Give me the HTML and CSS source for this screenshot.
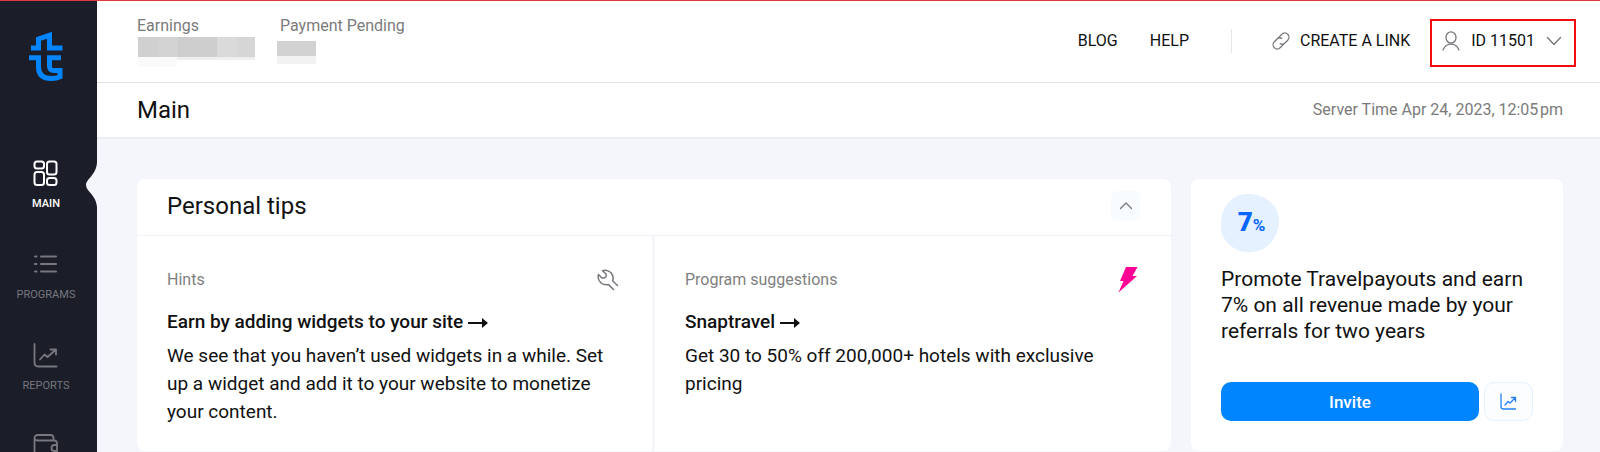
FILE: index.html
```
<!DOCTYPE html>
<html lang="en">
<head>
<meta charset="utf-8">
<meta name="viewport" content="width=device-width, initial-scale=1">
<title>Main</title>
<link rel="stylesheet" href="styles.css">
</head>
<body>
<div class="app">
  <aside class="sidebar">
    <a class="logo" href="#" aria-label="Travelpayouts">
      <svg width="34" height="52" viewBox="0 0 34 52" fill="none" stroke="#0085ff" stroke-width="5">
        <path d="M2 17H9.500V8L20.500 4.300V17H33.500"/>
        <path d="M0 26.700H9.500V36C9.500 44 14 47.500 22.500 47.500C26 47.500 28.500 47 31 45.700V39.500H25C21.500 39.500 20.500 38 20.500 35V26.700H32"/>
      </svg>
    </a>
    <nav class="menu">
      <a class="menu-item is-active" href="#">
        <svg width="26" height="26" viewBox="0 0 26 26" fill="none" stroke="currentColor" stroke-width="2">
          <rect x="1.500" y="1.500" width="9.500" height="7" rx="2.500"/>
          <rect x="14" y="1.500" width="9.500" height="13" rx="2.500"/>
          <rect x="1.500" y="12" width="9.500" height="13" rx="2.500"/>
          <rect x="14" y="18" width="9.500" height="7" rx="2.500"/>
        </svg>
        <span>MAIN</span>
      </a>
      <a class="menu-item" href="#">
        <svg width="26" height="26" viewBox="0 0 26 26" fill="none" stroke="currentColor" stroke-width="2" stroke-linecap="round">
          <path d="M2 5.500H3.500M8 5.500H23M2 13H3.500M8 13H23M2 20.500H3.500M8 20.500H23"/>
        </svg>
        <span>PROGRAMS</span>
      </a>
      <a class="menu-item" href="#">
        <svg width="26" height="26" viewBox="0 0 26 26" fill="none" stroke="currentColor" stroke-width="1.800" stroke-linecap="round" stroke-linejoin="round">
          <path d="M1.500 2V20.500Q1.500 24.500 5.500 24.500H23.500M7 17.500L11.500 12.500L14.500 15L22.500 8M17.500 7.500H23V12.500"/>
        </svg>
        <span>REPORTS</span>
      </a>
      <a class="menu-item" href="#" aria-label="Wallet">
        <svg width="26" height="26" viewBox="0 0 26 26" fill="none" stroke="currentColor" stroke-width="1.800" stroke-linecap="round" stroke-linejoin="round">
          <path d="M20.500 7V5Q20.500 2 17.500 2H5Q1.500 2 1.500 5.500V21Q1.500 25 5.500 25H21Q24 25 24 22V18M1.500 5.500Q2 7.500 5 7.500H21Q24 7.500 24 10.500V12"/>
          <path d="M24 12H21.500A3 3 0 0 0 21.500 18H24Z"/>
        </svg>
      </a>
    </nav>
    <svg class="notch" width="12" height="44" viewBox="0 0 12 44"><path d="M12 0C11 8 8 11 3 17Q-1 22 3 27C8 33 11 36 12 44Z" fill="#f5f6fb"/></svg>
  </aside>

  <div class="page">
    <header class="topbar">
      <dl class="balances">
        <div class="balance">
          <dt>Earnings</dt>
          <dd><svg width="118" height="30" viewBox="0 0 118 30">
            <path d="M0 0H20V20H0Z" fill="#d0d0d0"/><path d="M20 0H40V20H20Z" fill="#d3d3d3"/><path d="M40 0H79V20H40Z" fill="#cecece"/><path d="M79 0H99V20H79Z" fill="#dadada"/><path d="M99 0H117V20H99Z" fill="#d6d6d6"/>
            <path d="M0 20H39V30H0Z" fill="#fafafa"/><path d="M39 20H117V23H39Z" fill="#efefef"/>
          </svg></dd>
        </div>
        <div class="balance pending">
          <dt>Payment Pending</dt>
          <dd><svg width="39" height="23" viewBox="0 0 39 23">
            <path d="M0 0H39V15H0Z" fill="#d2d2d2"/><path d="M0 15H39V23H0Z" fill="#f2f2f2"/>
          </svg></dd>
        </div>
      </dl>
      <nav class="links">
        <a class="link" href="#">BLOG</a>
        <a class="link" href="#">HELP</a>
        <span class="divider"></span>
        <a class="link with-icon" href="#">
          <svg width="18" height="18" viewBox="0 0 18 18" fill="none" stroke="#77787d" stroke-width="1.300" stroke-linecap="round">
            <path d="M6.500 5.600L9.800 2.300A3.700 3.700 0 0 1 15.700 2.300A4.200 4.200 0 0 1 15.700 8.200L12.700 11.200A3.600 3.600 0 0 1 8.300 11.600"/>
            <path d="M11.500 12.400L8.200 15.700A3.700 3.700 0 0 1 2.300 15.700A4.200 4.200 0 0 1 2.300 9.800L5.300 6.800A3.600 3.600 0 0 1 9.700 6.400"/>
          </svg>
          CREATE A LINK
        </a>
        <button class="account" type="button">
          <svg width="18" height="20" viewBox="0 0 18 20" fill="none" stroke="#77787d" stroke-width="1.300" stroke-linecap="round">
            <ellipse cx="9" cy="6.500" rx="5" ry="5.600"/><path d="M1 19Q3.500 13.200 9 13.200T17 19"/>
          </svg>
          ID 11501
          <svg width="16" height="10" viewBox="0 0 16 10" fill="none" stroke="#77787d" stroke-width="1.400" stroke-linecap="round" stroke-linejoin="round"><path d="M1.500 1.500L8 8.500L14.500 1.500"/></svg>
        </button>
      </nav>
    </header>

    <div class="titlebar">
      <h1>Main</h1>
      <p>Server Time Apr 24, 2023, 12:05&#8202;pm</p>
    </div>

    <main class="content">
      <section class="card tips">
        <header class="tips-head">
          <h2>Personal tips</h2>
          <button class="collapse" type="button" aria-label="Collapse">
            <svg width="14" height="8" viewBox="0 0 14 8" fill="none" stroke="#77787d" stroke-width="1.400" stroke-linecap="round" stroke-linejoin="round"><path d="M1.500 6.500L7 1L12.500 6.500"/></svg>
          </button>
        </header>
        <div class="tips-body">
          <article class="tip">
            <div class="tip-label">
              <span>Hints</span>
              <svg width="22" height="22" viewBox="0 0 22 22" fill="none" stroke="#77787d" stroke-width="1.500" stroke-linecap="round" stroke-linejoin="round">
                <path d="M16.500 20.500L11.500 15.600Q7.500 16.500 4 14Q0 10 1.500 5.500L4.700 8.700Q7 9.700 8.600 8Q9.800 6.200 8.800 4.700L5.500 1.700Q10 0 13.800 3.500Q17.300 7.500 15.600 11.700L20.500 16.500"/>
              </svg>
            </div>
            <h3><a href="#">Earn by adding widgets to your site
              <svg class="arrow" width="20" height="10" viewBox="0 0 20 10"><path d="M0 4H14V0L20 5L14 10V6H0Z" fill="currentColor"/></svg></a></h3>
            <p>We see that you haven’t used widgets in a while. Set up a widget and add it to your website to monetize your content.</p>
          </article>
          <article class="tip">
            <div class="tip-label">
              <span>Program suggestions</span>
              <svg width="20" height="26" viewBox="0 0 20 26"><path d="M8 0H19.500L14.500 9H19L0.500 25.500L5.500 14H2Z" fill="#ff0095"/></svg>
            </div>
            <h3><a href="#">Snaptravel
              <svg class="arrow" width="20" height="10" viewBox="0 0 20 10"><path d="M0 4H14V0L20 5L14 10V6H0Z" fill="currentColor"/></svg></a></h3>
            <p>Get 30 to 50% off 200,000+ hotels with exclusive pricing</p>
          </article>
        </div>
      </section>

      <section class="card promo">
        <div class="badge"><strong>7</strong><span>%</span></div>
        <p>Promote Travelpayouts and earn 7% on all revenue made by your referrals for two years</p>
        <div class="actions">
          <button class="invite" type="button">Invite</button>
          <button class="stats" type="button" aria-label="Statistics">
            <svg width="17" height="17" viewBox="0 0 17 17" fill="none" stroke="#2480ef" stroke-width="1.300" stroke-linecap="round" stroke-linejoin="round">
              <path d="M1 1V13.500Q1 16 3.500 16H15.500M5 12L8 8.500L10 10L15 5M11.500 4.500H15.500V8.500"/>
            </svg>
          </button>
        </div>
      </section>
    </main>
  </div>
</div>
</body>
</html>
```

FILE: styles.css
```
* {
  box-sizing: border-box;
}

body {
  margin: 0;
  background: #f5f6fb;
  color: #111;
  font-family: Roboto, "Liberation Sans", sans-serif;
  font-size: 19px;
  line-height: 28px;
}

h1, h2, h3, p, dl, dd {
  margin: 0;
  font-weight: 400;
}

a {
  color: inherit;
  text-decoration: none;
}

button {
  margin: 0;
  padding: 0;
  border: 0;
  background: none;
  color: inherit;
  font: inherit;
  cursor: pointer;
}

svg {
  display: block;
  flex: none;
}

.app {
  display: flex;
  min-height: 100vh;
  border-top: 1px solid #e03a3e;
}

.sidebar {
  position: sticky;
  top: 0;
  flex: none;
  width: 97px;
  height: calc(100vh - 1px);
  overflow: hidden;
  background: #1b1d28;
}

.logo {
  display: block;
  width: 34px;
  margin: 30px 0 0 29px;
}

.menu {
  display: flex;
  flex-direction: column;
  gap: 39px;
  padding: 77px 5px 0 0;
}

.menu-item {
  display: flex;
  flex-direction: column;
  align-items: center;
  gap: 10px;
  color: #77787f;
  font-size: 11px;
  line-height: 16px;
}

.menu-item.is-active {
  color: #fff;
  font-weight: 500;
}

.notch {
  position: absolute;
  top: 162px;
  right: 0;
}

.page {
  flex: 1;
  min-width: 0;
}

.topbar {
  display: flex;
  align-items: flex-start;
  justify-content: space-between;
  min-height: 82px;
  padding: 15px 24px 12px 40px;
  border-bottom: 1px solid #e0e0ea;
  background: #fff;
}

.balances {
  display: flex;
  gap: 21px;
  color: #7b7b7b;
  font-size: 16px;
  line-height: 20px;
}

.balance {
  min-width: 119px;
}

.balance dd {
  padding: 1px 0 0 1px;
}

.pending dt {
  padding-left: 3px;
}

.pending dd {
  padding: 5px 0 0;
}

.links {
  display: flex;
  align-items: flex-start;
  gap: 32px;
  padding-top: 3px;
  font-size: 16px;
  line-height: 24px;
}

.link {
  margin-top: 10px;
}

.divider {
  width: 1px;
  height: 24px;
  margin: 10px 8px 0 10px;
  background: #e5e5ea;
}

.with-icon {
  display: flex;
  align-items: center;
  gap: 10px;
}

.account {
  display: flex;
  align-items: center;
  gap: 11px;
  margin-left: -12px;
  padding: 8px 12px 12px 10px;
  border: 2px solid #f60c0c;
}

.titlebar {
  display: flex;
  align-items: center;
  justify-content: space-between;
  padding: 13px 37px 13px 40px;
  border-bottom: 2px solid #ecedf3;
  background: #fff;
}

.titlebar h1 {
  font-size: 24px;
}

.titlebar p {
  color: #7b7b7b;
  font-size: 16px;
}

.content {
  display: grid;
  grid-template-columns: 1034fr 372fr;
  gap: 20px;
  padding: 40px 37px 1px 40px;
}

.card {
  border-radius: 8px;
  background: #fff;
}

.tips {
  display: flex;
  flex-direction: column;
}

.tips-head {
  display: flex;
  align-items: center;
  justify-content: space-between;
  padding: 12px 31px 14px 30px;
  border-bottom: 1px solid #f0f1f6;
}

.tips-head h2 {
  font-size: 24px;
}

.collapse {
  display: grid;
  place-items: center;
  width: 29px;
  height: 30px;
  border-radius: 6px;
  background: #f8fbff;
}

.tips-body {
  display: grid;
  flex: 1;
  grid-template-columns: 518fr 516fr;
}

.tip {
  padding: 30px 33px 19px 30px;
}

.tip:first-child {
  border-right: 3px solid #f5f6fb;
}

.tip-label {
  display: flex;
  align-items: center;
  justify-content: space-between;
  height: 28px;
  color: #7f7f7f;
  font-size: 16px;
}

.tip h3 {
  margin: 14px 0 6px;
  font-size: 19px;
  font-weight: 500;
}

.arrow {
  display: inline-block;
}

.promo {
  padding: 15px 30px 30px;
}

.badge {
  display: flex;
  align-items: baseline;
  justify-content: center;
  width: 58px;
  height: 58px;
  padding-left: 3px;
  border-radius: 46% 54% 50% 50% / 52% 48% 56% 44%;
  background: #e5f1ff;
  color: #0866ff;
  line-height: 56px;
}

.badge strong {
  font-size: 26px;
  font-weight: 900;
}

.badge span {
  font-size: 17px;
  font-weight: 700;
}

.promo p {
  margin: 14px 0 38px;
  font-size: 21px;
  line-height: 26px;
}

.actions {
  display: flex;
  gap: 5px;
}

.invite {
  flex: 1;
  height: 39px;
  border-radius: 10px;
  background: #0085ff;
  color: #fff;
  font-size: 17px;
  font-weight: 500;
}

.stats {
  display: grid;
  place-items: center;
  width: 49px;
  height: 39px;
  border: 1px solid #e5f2ff;
  border-radius: 10px;
  background: #fbfdff;
}
```
